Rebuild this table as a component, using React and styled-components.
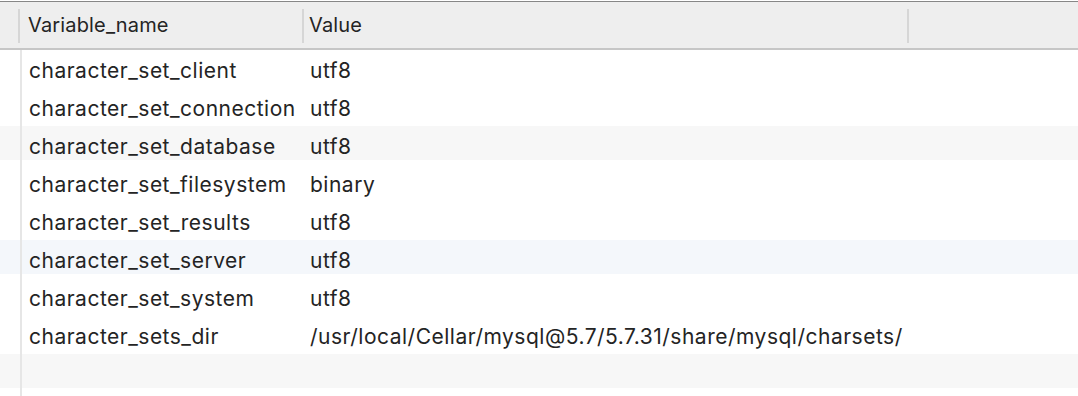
import styled, { createGlobalStyle } from "styled-components";

const GlobalStyle = createGlobalStyle`
    html, body {
        margin: 0;
        padding: 0;
        background: #ffffff;
    }
    body {
        font-family: Inter, "Liberation Sans", sans-serif;
        color: #242424;
    }
`;

const columns = [
    { width: 20 },
    { width: 284, label: "Variable_name", headPad: 8, cellPad: 7 },
    { width: 605, label: "Value", headPad: 5, cellPad: 6 },
    { width: 169 },
];

const rows = [
    ["character_set_client", "utf8"],
    ["character_set_connection", "utf8"],
    ["character_set_database", "utf8", "#f7f7f7"],
    ["character_set_filesystem", "binary"],
    ["character_set_results", "utf8"],
    ["character_set_server", "utf8", "#f4f7fb"],
    ["character_set_system", "utf8"],
    ["character_sets_dir", "/usr/local/Cellar/mysql@5.7/5.7.31/share/mysql/charsets/"],
    ["", "", "#f7f7f7"],
    ["", ""],
];

const App = () => {
    return (
        <>
            <GlobalStyle />
            <Page>
                <Header>
                    {columns.map((col, i) => (
                        <HeaderCell key={i} $width={col.width}>
                            <HeaderLabel $pad={col.headPad || 0}>{col.label}</HeaderLabel>
                            {i < 3 && <Divider />}
                        </HeaderCell>
                    ))}
                </Header>
                <Body>
                    {rows.map(([name, value, stripe], i) => (
                        <Row key={i} $stripe={stripe}>
                            <Gutter />
                            <Cell $width={columns[1].width - 2} $pad={columns[1].cellPad}>
                                {name}
                            </Cell>
                            <Cell $width={columns[2].width} $pad={columns[2].cellPad}>
                                {value}
                            </Cell>
                        </Row>
                    ))}
                </Body>
            </Page>
        </>
    );
};

export default App;

const Page = styled.div`
    width: 1078px;
    height: 396px;
    overflow: hidden;
    background: #ffffff;
    padding-top: 1px;
    box-sizing: border-box;
`;

const Header = styled.div`
    display: flex;
    height: 46px;
    background: #eeeeee;
    border-top: 1px solid #878787;
    border-bottom: 2px solid #c6c6c6;
`;

const HeaderCell = styled.div`
    display: flex;
    align-items: center;
    width: ${(p) => p.$width}px;
    flex-shrink: 0;
`;

const HeaderLabel = styled.span`
    flex: 1;
    padding-left: ${(p) => p.$pad}px;
    padding-bottom: 1px;
    font-size: 20px;
    letter-spacing: 0.15px;
    line-height: 24px;
    white-space: nowrap;
    overflow: hidden;
`;

const Divider = styled.span`
    width: 2px;
    height: 34px;
    margin-top: 1px;
    background: #d6d6d6;
`;

const Body = styled.div`
    display: flex;
    flex-direction: column;
`;

const Row = styled.div`
    display: flex;
    height: 38px;
    background: linear-gradient(
        to bottom,
        ${(p) => p.$stripe || "#ffffff"} 0 34px,
        #ffffff 34px
    );
`;

const Gutter = styled.div`
    width: 20px;
    flex-shrink: 0;
    border-right: 2px solid #e6e6e6;
`;

const Cell = styled.div`
    width: ${(p) => p.$width}px;
    flex-shrink: 0;
    box-sizing: border-box;
    padding: 9px 0 0 ${(p) => p.$pad}px;
    font-size: 21px;
    letter-spacing: 0.5px;
    line-height: 24px;
    white-space: nowrap;
`;
